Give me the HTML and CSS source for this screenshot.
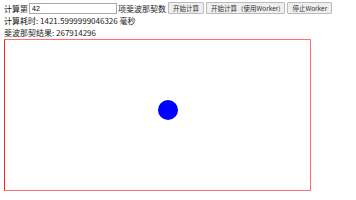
FILE: index.html
```html
<!DOCTYPE html>
<html lang="zh-CN">
<head>
  <meta charset="UTF-8">
  <title>Worker 斐波那契</title>
  <link rel="stylesheet" href="styles.css">
</head>
<body>
  <div class="controls">
    <label>计算第<input type="text" id="num" value="42">项斐波那契数</label>
    <button>开始计算</button>
    <button>开始计算（使用Worker)</button>
    <button>停止Worker</button>
  </div>
  <div class="info">计算耗时: 1421.5999999046326 毫秒</div>
  <div class="info">斐波那契结果: 267914296</div>
  <div class="stage">
    <svg width="305" height="150" viewBox="0 0 305 150">
      <circle cx="163" cy="70" r="10" fill="#0000ff"/>
    </svg>
  </div>
</body>
</html>
```

FILE: styles.css
```css
body {
  margin: 2px 4px;
  font-family: "Noto Sans CJK SC", "Liberation Sans", sans-serif;
  font-size: 8px;
  color: #222;
  background: #fff;
}

.controls {
  display: flex;
  align-items: center;
  height: 12px;
}

.controls label {
  display: flex;
  align-items: center;
}

.controls input {
  width: 82px;
  height: 9px;
  margin: 0 1px;
  padding: 0 2px;
  border: 1px solid #aaa;
  font-family: "Liberation Sans", sans-serif;
  font-size: 7px;
}

.controls button {
  height: 12px;
  margin-left: 2px;
  padding: 0 4px;
  border: 1px solid #bbb;
  border-radius: 1px;
  background: #efefef;
  color: #333;
  font-family: "Noto Sans CJK SC", "Liberation Sans", sans-serif;
  font-size: 6.5px;
  line-height: 10px;
}

.info {
  margin-top: 1px;
  line-height: 11px;
}

.stage {
  width: 305px;
  height: 150px;
  margin-top: 1px;
  border: 1px solid #ff7070;
  border-left-color: #ff2020;
}

.stage svg {
  display: block;
}
```
